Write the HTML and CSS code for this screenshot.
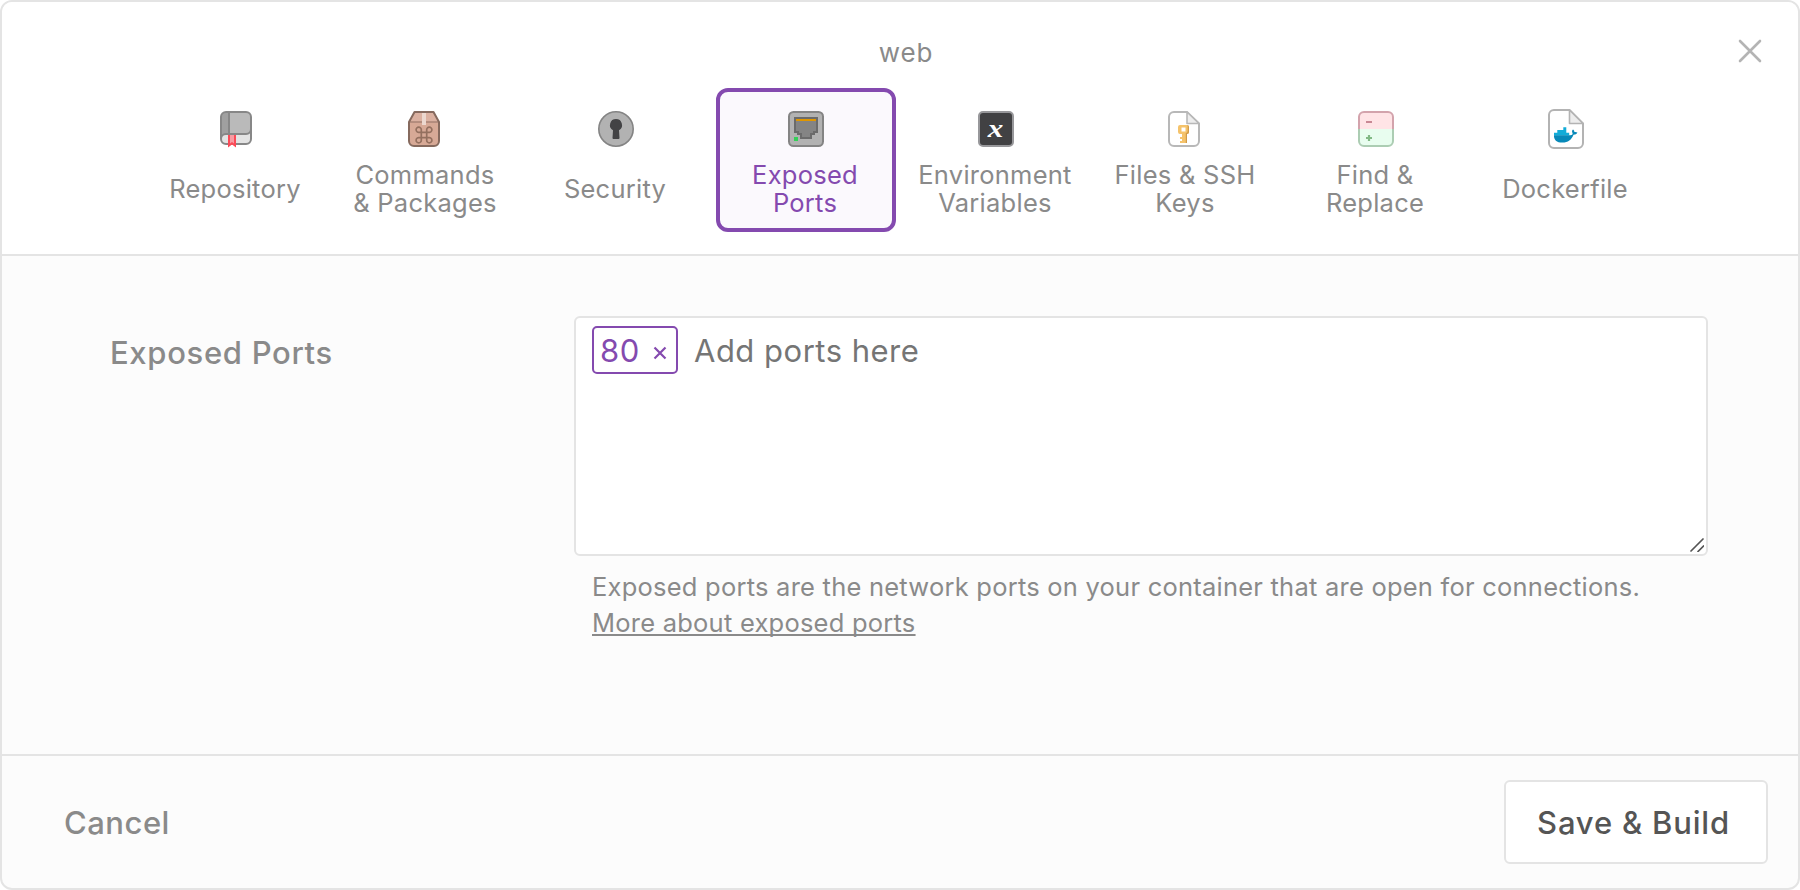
FILE: index.html
```html
<!DOCTYPE html>
<html lang="en">
<head>
<meta charset="utf-8">
<title>web</title>
<link rel="stylesheet" href="styles.css">
</head>
<body>
<div class="dialog">
  <header class="header">
    <div class="title">web</div>
    <button class="close" aria-label="Close"><svg width="24" height="24" viewBox="0 0 24 24"><path d="M2 2L22 22M22 2L2 22" stroke="#b4b4b4" stroke-width="2.6" stroke-linecap="round"/></svg></button>
    <nav class="tabs">
      <a class="tab">
        <svg class="icon" viewBox="0 0 36 36">
          <rect x="3" y="1" width="30" height="32" rx="5" fill="#e3e3e3"/>
          <path d="M3 28V6a5 5 0 0 1 5-5h20a5 5 0 0 1 5 5v12a5 5 0 0 1-5 5H8a5 5 0 0 0-5 5z" fill="#bababa"/>
          <path d="M3 27V6a5 5 0 0 1 5-5h3v22H8a5 5 0 0 0-5 4z" fill="#a0a0a0"/>
          <path d="M11 1v22M3 28a5 5 0 0 1 5-5h20a5 5 0 0 0 5-5" fill="none" stroke="#878787" stroke-width="2"/>
          <rect x="3" y="1" width="30" height="32" rx="5" fill="none" stroke="#878787" stroke-width="2"/>
          <path d="M10 24h8v12l-4-3-4 3z" fill="#f79ba2"/>
          <path d="M11 24v10.500l3-2.300 3 2.300V24" fill="none" stroke="#fb4a57" stroke-width="2"/>
        </svg>
        <span class="label">Repository</span>
      </a>
      <a class="tab">
        <svg class="icon" viewBox="0 0 36 36">
          <path d="M1 11L6.500 1h19L31 11v19a5 5 0 0 1-5 5H6a5 5 0 0 1-5-5z" fill="#d7a996"/>
          <path d="M1 11L6.500 1h19L31 11z" fill="#dbb1a1"/>
          <path d="M1 11h30" stroke="#a98374" stroke-width="1.500"/>
          <path d="M14 2h4v12h-4z" fill="#ecd8cf"/>
          <path d="M1 11L6.500 1h19L31 11v19a5 5 0 0 1-5 5H6a5 5 0 0 1-5-5z" fill="none" stroke="#866a5e" stroke-width="2" stroke-linejoin="round"/>
          <path d="M13.300 21.300h5.400v5.400h-5.400zM13.300 21.300h-2.100a2.600 2.600 0 1 1 2.100-2.300zM18.700 21.300V19a2.600 2.600 0 1 1 2.100 2.300zM18.700 26.700h2.100a2.600 2.600 0 1 1-2.100 2.300zM13.300 26.700V29a2.600 2.600 0 1 1-2.100-2.300z" fill="none" stroke="#94705f" stroke-width="1.700"/>
        </svg>
        <span class="label">Commands<br>&amp; Packages</span>
      </a>
      <a class="tab">
        <svg class="icon" viewBox="0 0 36 36">
          <circle cx="18" cy="18" r="17.200" fill="#b2b2b2" stroke="#848484" stroke-width="1.600"/>
          <path d="M18 8a6 6 0 0 1 3 11.200L21.500 27q0 1-1 1h-5q-1 0-1-1l.5-7.800A6 6 0 0 1 18 8z" fill="#434345"/>
        </svg>
        <span class="label">Security</span>
      </a>
      <a class="tab active">
        <svg class="icon" viewBox="0 0 36 36">
          <rect x="1" y="1" width="34" height="34" rx="4.500" fill="#b2b2b2" stroke="#848484" stroke-width="2"/>
          <path d="M7 7h22v14h-3v2h-3v4H13v-4h-3v-2H7z" fill="#848484" stroke="#6b6b6b" stroke-width="2"/>
          <path d="M8 8h20v2H8z" fill="#e09600"/>
          <path d="M6 26h4v4H6z" fill="#34d058"/>
        </svg>
        <span class="label">Exposed<br>Ports</span>
      </a>
      <a class="tab">
        <svg class="icon" viewBox="0 0 36 36">
          <rect x="1" y="1" width="34" height="34" rx="4" fill="#414143" stroke="#98989b" stroke-width="2"/>
          <text x="0" y="0" text-anchor="middle" class="glyph" transform="translate(17.500 25.500) scale(1.200 1)">x</text>
        </svg>
        <span class="label">Environment<br>Variables</span>
      </a>
      <a class="tab">
        <svg class="icon" viewBox="0 0 36 36">
          <path d="M19 1H6a5 5 0 0 0-5 5v24a5 5 0 0 0 5 5h20a5 5 0 0 0 5-5V12.500z" fill="#fff" stroke="#b8b8b8" stroke-width="2" stroke-linejoin="round"/>
          <path d="M19 1v11.500h12z" fill="#ededed" stroke="#b8b8b8" stroke-width="1.600" stroke-linejoin="round"/>
          <path fill-rule="evenodd" d="M12 14h7q2 0 2 2v5q0 2-2 2v9h-7v-2h2v-2h-2v-2h2v-3h-2q-2 0-2-2v-5q0-2 2-2zM13.500 16.500v4h4v-4z" fill="#f5c36b"/>
          <path d="M19 14q2 0 2 2v5q0 2-2 2v9h-1.200v-10q1.900 0 1.900-2v-5z" fill="#d09a48"/>
        </svg>
        <span class="label">Files &amp; SSH<br>Keys</span>
      </a>
      <a class="tab">
        <svg class="icon" viewBox="0 0 36 36">
          <path d="M1 18V6a5 5 0 0 1 5-5h24a5 5 0 0 1 5 5v12z" fill="#ffe4e6"/>
          <path d="M1 18v12a5 5 0 0 0 5 5h24a5 5 0 0 0 5-5V18z" fill="#e8fdef"/>
          <path d="M1 18V6a5 5 0 0 1 5-5h24a5 5 0 0 1 5 5v12" fill="none" stroke="#d3a3ac" stroke-width="2"/>
          <path d="M1 18v12a5 5 0 0 0 5 5h24a5 5 0 0 0 5-5V18" fill="none" stroke="#accdb3" stroke-width="2"/>
          <path d="M8 11h6" stroke="#c98894" stroke-width="2"/>
          <path d="M8 27h6M11 24v6" stroke="#82b985" stroke-width="2.200"/>
        </svg>
        <span class="label">Find &amp;<br>Replace</span>
      </a>
      <a class="tab">
        <svg class="icon" viewBox="0 0 36 36">
          <path d="M21.500-1H6a5 5 0 0 0-5 5v28a5 5 0 0 0 5 5h24a5 5 0 0 0 5-5V12.500z" fill="#fff" stroke="#b3b3b3" stroke-width="2" stroke-linejoin="round"/>
          <path d="M21.500-1v13.500H35z" fill="#ededed" stroke="#b3b3b3" stroke-width="1.600" stroke-linejoin="round"/>
          <path d="M6 24.500v-2.700h3.300v-2.900h6v-2.700h3v5.600h2.900v2.700z" fill="#12acd8"/>
          <path d="M6 24.200h16.300c1.700 0 2.500-1 2.300-2.300-.8-1.100-.8-2.400.4-3.500 1 .8 1.500 1.700 1.400 2.600 1.100-.2 2.200 0 3 .5-.7 1.600-2 2.200-3.900 2.200C23.600 28.700 20 31.600 14.500 31.600 8.500 31.600 5.700 28.800 6 24.200z" fill="#0889b9"/>
        </svg>
        <span class="label">Dockerfile</span>
      </a>
    </nav>
  </header>
  <main class="body">
    <label class="field-label">Exposed Ports</label>
    <div class="field">
      <div class="ports">
        <span class="tag">80<svg class="remove" width="14" height="14" viewBox="0 0 14 14"><path d="M1.500 1.500l11 11M12.500 1.500l-11 11" stroke="#844aaf" stroke-width="2.200"/></svg></span>
        <span class="placeholder">Add ports here</span>
        <svg class="grip" width="14" height="14" viewBox="0 0 14 14"><path d="M1 13L13 1M8 13.500L13.500 8" stroke="#555" stroke-width="1.700" stroke-linecap="round"/></svg>
      </div>
      <p class="help"><span class="help-text">Exposed ports are the network ports on your container that are open for connections.</span><br><a class="more">More about exposed ports</a></p>
    </div>
  </main>
  <footer class="footer">
    <button class="cancel">Cancel</button>
    <button class="save">Save &amp; Build</button>
  </footer>
</div>
</body>
</html>
```
FILE: styles.css
```css
* { box-sizing: border-box; }
body { margin: 0; background: #fff; font-family: Inter, "Liberation Sans", sans-serif; color: #8a8a8a; }
button { font: inherit; letter-spacing: inherit; padding: 0; border: 0; background: none; color: inherit; }
.dialog { display: flex; flex-direction: column; width: 1800px; height: 890px; border: 2px solid #e4e4e4; border-radius: 12px; overflow: hidden; background: #fcfcfc; }
.header { position: relative; height: 254px; padding: 34px 0 0 144px; background: #fff; border-bottom: 2px solid #e4e4e4; }
.title { width: 1520px; height: 52px; line-height: 34px; text-align: center; font-size: 26px; letter-spacing: 0.8px; }
.close { position: absolute; top: 37px; right: 36px; width: 24px; height: 24px; }
.close svg { display: block; }
.tabs { display: flex; gap: 10px; }
.tab { display: flex; flex-direction: column; align-items: center; gap: 14px; width: 180px; height: 144px; padding-top: 23px; border-radius: 12px; }
.tab.active { padding-top: 19px; border: 4px solid #844aaf; background: #fbf9fd; color: #844aaf; }
.icon { display: block; width: 36px; height: 36px; overflow: visible; }
.glyph { font: italic bold 26px "Liberation Serif", serif; fill: #fff; }
.label { display: flex; align-items: center; justify-content: center; height: 56px; margin-right: 2px; line-height: 28px; font-size: 25.5px; letter-spacing: 0.25px; text-align: center; white-space: nowrap; }
.body { display: flex; height: 498px; padding: 60px 90px 0 108px; }
.field-label { width: 464px; padding-top: 17px; font-size: 31px; line-height: 40px; font-weight: 500; letter-spacing: 0.68px; }
.field { width: 1134px; }
.ports { position: relative; display: flex; height: 240px; padding: 8px 16px; border: 2px solid #e4e4e4; border-radius: 6px; background: #fff; font-size: 31px; letter-spacing: 0.5px; }
.tag { display: flex; align-items: center; justify-content: space-between; width: 86px; height: 48px; padding: 2px 9px 0 6px; border: 2px solid #844aaf; border-radius: 5px; color: #844aaf; line-height: 44px; }
.remove { margin-top: 3px; }
.placeholder { margin-left: 16px; line-height: 50px; color: #757575; }
.grip { position: absolute; right: 2px; bottom: 2px; }
.help { margin: 13px 0 0 18px; font-size: 25.5px; line-height: 36px; letter-spacing: 0.23px; white-space: nowrap; }
.more { text-decoration: underline; text-decoration-thickness: 2px; text-underline-offset: 2px; text-decoration-skip-ink: none; }
.footer { display: flex; align-items: center; justify-content: space-between; height: 134px; padding: 0 30px 0 62px; border-top: 2px solid #e4e4e4; font-size: 31px; font-weight: 500; letter-spacing: 0.5px; }
.save { width: 264px; height: 84px; padding-right: 5px; border: 2px solid #e4e4e4; border-radius: 6px; background: #fff; color: #555; letter-spacing: 0.8px; }
```
